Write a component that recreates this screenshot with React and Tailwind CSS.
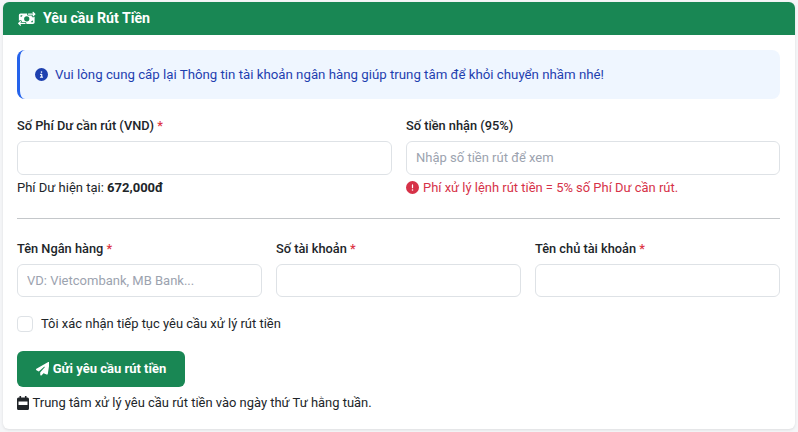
import React from "react";
import { FaMoneyBillTransfer, FaCircleInfo, FaCircleExclamation, FaPaperPlane } from "react-icons/fa6";

function Field({ label, required, placeholder }) {
  return (
    <div className="flex flex-col">
      <label className="mt-[1px] mb-[5px] text-[12.8px] leading-[20px] font-medium text-[#212529]">
        {label}
        {required && <span className="text-[#dc3545]"> *</span>}
      </label>
      <input
        placeholder={placeholder}
        className="h-[33.5px] w-full rounded-[6px] border border-[#dee2e6] bg-white px-[9px] text-[13px] text-[#212529] placeholder:text-[#9ca3af] outline-none"
      />
    </div>
  );
}

export default function App() {
  return (
    <div className="min-h-[432px] bg-[#f5f6f8] px-[3px] pt-[2px] font-['Roboto',sans-serif]">
      <div className="h-[427px] w-[792px] overflow-hidden rounded-[6px] bg-white shadow-[0_1px_3px_rgba(0,0,0,0.1)]">
        <div className="flex h-[33px] items-center gap-[7.5px] bg-[#198754] pl-[15px] text-white">
          <FaMoneyBillTransfer className="text-[17.5px]" />
          <h1 className="text-[14.2px] font-bold leading-none">Yêu cầu Rút Tiền</h1>
        </div>
        <div className="pl-[14px] pr-[15px] pt-[15px]">
          <div className="flex h-[49px] items-center gap-[7px] rounded-[8px] border-l-[3px] border-[#2563eb] bg-[#eff6ff] pl-[15px] text-[13.25px] text-[#1e40af]">
            <FaCircleInfo className="text-[13px]" />
            <span>Vui lòng cung cấp lại Thông tin tài khoản ngân hàng giúp trung tâm để khỏi chuyển nhầm nhé!</span>
          </div>

          <div className="mt-[16px] grid grid-cols-[375px_374px] gap-x-[14px]">
            <div>
              <Field label="Số Phí Dư cần rút (VND)" required />
              <p className="mt-[3px] text-[13px] leading-[20px] text-[#212529]">
                Phí Dư hiện tại: <b className="font-bold">672,000đ</b>
              </p>
            </div>
            <div>
              <Field label="Số tiền nhận (95%)" placeholder="Nhập số tiền rút để xem" />
              <p className="mt-[3px] flex items-center gap-[4px] text-[12.95px] leading-[20px] text-[#d63248]">
                <FaCircleExclamation className="text-[13px]" />
                Phí xử lý lệnh rút tiền = 5% số Phí Dư cần rút.
              </p>
            </div>
          </div>

          <hr className="mt-[20px] border-t border-[#c4c7ca]" />

          <div className="mt-[19px] grid grid-cols-3 gap-x-[14px]">
            <Field label="Tên Ngân hàng" required placeholder="VD: Vietcombank, MB Bank..." />
            <Field label="Số tài khoản" required />
            <Field label="Tên chủ tài khoản" required />
          </div>

          <label className="mt-[16.5px] flex items-center gap-[8px] text-[12.95px] leading-[20px] text-[#212529]">
            <span className="h-[16px] w-[16px] rounded-[4px] border border-[#dee2e6] bg-white" />
            Tôi xác nhận tiếp tục yêu cầu xử lý rút tiền
          </label>

          <button className="mt-[17.5px] flex h-[36px] w-[168px] items-center justify-center gap-[3.5px] rounded-[6px] bg-[#198754] text-[13px] font-bold text-white">
            <FaPaperPlane className="text-[13.5px]" />
            Gửi yêu cầu rút tiền
          </button>

          <p className="mt-[6px] flex items-center gap-[3.5px] text-[12.95px] leading-[20px] text-[#212529]">
            <svg viewBox="0 0 12 14" className="h-[14px] w-[12px]" fill="#212529">
              <path d="M2.5 0h1.6v2H2.5zM7.9 0h1.6v2H7.9z" />
              <path
                fillRule="evenodd"
                d="M1.5 1.5h9a1.5 1.5 0 0 1 1.5 1.5v9.5a1.5 1.5 0 0 1-1.5 1.5h-9A1.5 1.5 0 0 1 0 12.5V3a1.5 1.5 0 0 1 1.5-1.5zM1.5 5.5v3.5h9V5.5z"
              />
            </svg>
            Trung tâm xử lý yêu cầu rút tiền vào ngày thứ Tư hằng tuần.
          </p>
        </div>
      </div>
    </div>
  );
}
